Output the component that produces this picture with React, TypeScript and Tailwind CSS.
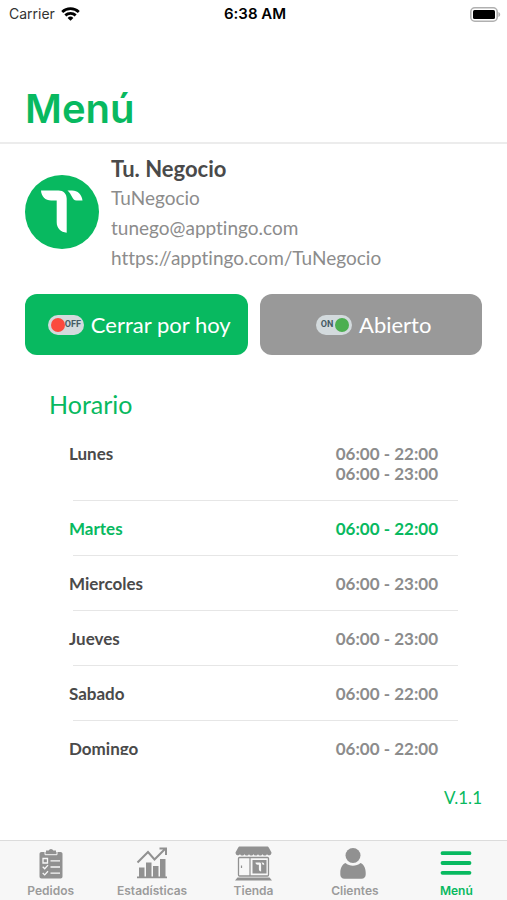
import type { ReactNode } from 'react'

type Day = { name: string; hours: string[] }

const DAYS: Day[] = [
  { name: 'Lunes', hours: ['06:00 - 22:00', '06:00 - 23:00'] },
  { name: 'Martes', hours: ['06:00 - 22:00'] },
  { name: 'Miercoles', hours: ['06:00 - 23:00'] },
  { name: 'Jueves', hours: ['06:00 - 23:00'] },
  { name: 'Sabado', hours: ['06:00 - 22:00'] },
  { name: 'Domingo', hours: ['06:00 - 22:00'] },
]

const TODAY = 'Martes'

function WifiIcon() {
  return (
    <svg viewBox="0 0 19 14" className="h-3.5 w-[19px]" fill="none" stroke="#000" strokeWidth="2.8">
      <path d="M1.2 4.9C5.8.6 13.2.6 17.8 4.9" />
      <path d="M4.3 8.4c2.9-2.6 7.5-2.6 10.4 0" />
      <path d="M9.5 13.8 6.6 10.9a4.2 4.2 0 0 1 5.8 0z" fill="#000" stroke="none" />
    </svg>
  )
}

function BatteryIcon() {
  return (
    <svg viewBox="0 0 31 15" className="h-[15px] w-[31px]">
      <rect x="0.8" y="0.8" width="26.4" height="13.4" rx="4" fill="#fff" stroke="#b0b0b0" strokeWidth="1.6" />
      <rect x="3" y="3" width="22" height="9" rx="1.5" fill="#000" />
      <path d="M28.4 5c2.4.8 2.4 4.2 0 5z" fill="#b0b0b0" />
    </svg>
  )
}

function Logo() {
  return (
    <svg viewBox="0 0 74 74" className="mb-1 size-[74px] shrink-0" role="img" aria-label="Tu. Negocio">
      <circle cx="37" cy="37" r="37" fill="#08b960" />
      <path d="M16 15.5h17.5c5 0 8.2 3.3 8.2 8.2v34c-6-.6-10-4.500-10-10.500V25.500h-5.500c-5.900 0-9.800-4-10.200-10z" fill="#fff" />
      <path d="M42.500 15.500h4.500c5.800 0 9.800 4 10.500 10h-6c-4.500 0-4.500-6.500-9-10z" fill="#fff" />
    </svg>
  )
}

function Pill({ on }: { on?: boolean }) {
  return (
    <span className={`flex h-5 w-9 items-center justify-between rounded-full bg-[#d3dadd] px-[3px] ${on ? 'flex-row-reverse' : ''}`}>
      <span className={`size-3.5 shrink-0 rounded-full ${on ? 'bg-[#4caf50]' : 'bg-[#fb4a3e]'}`} />
      <span className="flex-1 text-center font-['Roboto',sans-serif] text-[9px] leading-none font-bold text-[#455a64]">
        {on ? 'ON' : 'OFF'}
      </span>
    </span>
  )
}

function OrdersIcon() {
  return (
    <svg viewBox="0 0 24 31" className="h-[31px] w-6">
      <path d="M2.5 4h19c1.200 0 2 .8 2 2v22.500c0 1.200-.8 2-2 2h-19c-1.200 0-2-.8-2-2V6c0-1.200.8-2 2-2z" fill="#919191" />
      <path d="M6 3.500v3.200h12V3.500" fill="none" stroke="#f7f7f7" strokeWidth="1" />
      <path d="M7 5.800V2.600h2.700a2.400 2.400 0 0 1 4.600 0H17v3.200z" fill="#919191" />
      <g fill="none" stroke="#f7f7f7" strokeWidth="1.3">
        <path d="M4 10.500h4.500V15H4zM3.700 18.800l2 1.900 3.300-3.600M3.700 25l2 1.900L9 23.300M11.500 12.800H21M11.500 19H21M11.500 25.200H21" />
      </g>
    </svg>
  )
}

function StatsIcon() {
  return (
    <svg viewBox="0 0 32 32" className="size-8">
      <path d="M1 29.500h30v1.800H1zM3 20.500h5.500v9H3zM10 15.500h5.500v14H10zM17 19h5.500v10.500H17zM24 12h5.500v17.500H24z" fill="#919191" />
      <path d="M1.500 15.500 12 5l6.500 7.500L29 2M23.500 1.500h6.500V8" fill="none" stroke="#919191" strokeWidth="2" />
    </svg>
  )
}

function StoreIcon() {
  return (
    <svg viewBox="0 0 37 35" className="h-[35px] w-[37px]">
      <path d="M5 .5h27c1 0 1.500.4 1.900 1.200L36.500 6.500c0 3.500-4 3.500-4.500 1.500-.6 2-3.900 2-4.500 0-.6 2-3.900 2-4.500 0-.6 2-3.900 2-4.500 0-.6 2-3.900 2-4.500 0-.6 2-3.900 2-4.500 0-.6 2-3.900 2-4.500 0-.5 2-4.500 2-4.500-1.500L3.100 1.700C3.500.9 4 .5 5 .5z" fill="#919191" />
      <rect x="3.5" y="11.5" width="30" height="18.5" rx="1" fill="none" stroke="#919191" strokeWidth="1.3" />
      <path d="M15 11.500V30M6.500 19.500v2.500" stroke="#919191" strokeWidth="1.2" />
      <rect x="17.5" y="14" width="14" height="13.5" fill="#919191" />
      <path d="M20.500 16.500h4c1 0 1.600.6 1.600 1.600v7.400c-1.400-.2-2.200-1-2.200-2.300v-4.500h-1.400c-1.200 0-2-.9-2-2.200zM26.500 16.500h.8c1.200 0 2 .9 2 2.200h-1.200c-.8 0-.8-1.400-1.600-2.200z" fill="#f7f7f7" />
      <path d="M2.500 31.500h32L37 34.500H0z" fill="#919191" />
    </svg>
  )
}

function ClientsIcon() {
  return (
    <svg viewBox="0 0 26 31" className="mr-1 h-[31px] w-[26px]" fill="#919191">
      <circle cx="13" cy="7.5" r="7.5" />
      <path d="M5.500 15c4.200 3.500 10.800 3.500 15 0 3 1.200 5.200 5 5.200 9.500v2c0 2.600-1.600 4.300-4.200 4.300h-17C1.900 30.800.3 29.100.3 26.500v-2C.3 20 2.500 16.200 5.500 15z" />
    </svg>
  )
}

function MenuIcon() {
  return (
    <svg viewBox="0 0 32 24" className="h-6 w-8" stroke="#08b960" strokeWidth="3.8" strokeLinecap="round">
      <path d="M2.500 2.200h27M2.500 12h27M2.500 21.800h27" />
    </svg>
  )
}

function Tab({ label, icon, active }: { label: string; icon: ReactNode; active?: boolean }) {
  return (
    <a
      href={`#${label.toLowerCase()}`}
      aria-current={active ? 'page' : undefined}
      className={`flex flex-1 flex-col items-center text-xs font-semibold ${active ? 'text-[#08b960]' : 'text-[#9b9b9b]'}`}
    >
      <span className="flex h-[38px] items-center">{icon}</span>
      <span className="leading-[18px]">{label}</span>
    </a>
  )
}

export default function App() {
  return (
    <div className="flex h-screen flex-col overflow-hidden bg-white font-['Lato','Open_Sans',sans-serif] text-[#8c8c8c] [font-variant-ligatures:none]">
      <div className="grid h-7 shrink-0 grid-cols-3 items-center pr-1.5 pl-[9px] font-['Inter',sans-serif] text-sm text-black">
        <span className="flex items-center gap-1.5 text-[#333]">Carrier <WifiIcon /></span>
        <span className="text-center text-[15px] font-semibold">6:38 AM</span>
        <span className="flex justify-end"><BatteryIcon /></span>
      </div>

      <header className="shrink-0 border-b-2 border-[#ececec] px-[25px] pt-[57px] pb-[9px]">
        <h1 className="font-['Inter',sans-serif] text-[40px] leading-12 font-semibold text-[#08b960]">Menú</h1>
      </header>

      <main className="flex min-h-0 flex-1 flex-col px-[25px] pt-[10px]">
        <section className="flex shrink-0 items-center gap-3 text-[19px] leading-[30px]">
          <Logo />
          <div>
            <h2 className="text-[22px] leading-[29px] font-bold text-[#4a4a4a]">Tu. Negocio</h2>
            <p>TuNegocio</p>
            <p><a href="mailto:tunego@apptingo.com">tunego@apptingo.com</a></p>
            <p><a href="https://apptingo.com/TuNegocio">https://apptingo.com/TuNegocio</a></p>
          </div>
        </section>

        <div className="mt-[21px] flex shrink-0 gap-3 text-[22px] text-white">
          <button type="button" className="flex h-[61px] flex-1 items-center justify-center gap-[7px] rounded-xl bg-[#08b960] pl-1.5">
            <Pill /> Cerrar por hoy
          </button>
          <button type="button" className="flex h-[61px] flex-1 items-center justify-center gap-[7px] rounded-xl bg-[#999] pl-1.5">
            <Pill on /> Abierto
          </button>
        </div>

        <section className="mt-[35px] min-h-0 flex-1 overflow-y-auto px-6 [scrollbar-width:none]">
          <h2 className="text-[25px] leading-7 text-[#08b960]">Horario</h2>
          <table className="mt-2 ml-6 w-[calc(100%-24px)] border-collapse text-[17px] leading-5 font-bold">
            <tbody>
              {DAYS.map(day => (
                <tr key={day.name} className={`border-b border-[#e6e6e6] ${day.name === TODAY ? 'text-[#08b960]' : ''}`}>
                  <th scope="row" className={`pt-[18px] pb-4 text-left align-top ${day.name === TODAY ? '' : 'text-[#4a4a4a]'}`}>
                    <span className="-ml-1 block">{day.name}</span>
                  </th>
                  <td className="pt-[18px] pr-5 pb-4 text-right">
                    {day.hours.map(h => <div key={h}>{h}</div>)}
                  </td>
                </tr>
              ))}
            </tbody>
          </table>
        </section>

        <p className="shrink-0 pt-[33px] pb-8 text-right text-[17px] leading-5 text-[#08b960]">V.1.1</p>
      </main>

      <nav className="flex h-[60px] shrink-0 border-t border-[#dcdcdc] bg-[#f7f7f7] pt-[3px] font-['Inter',sans-serif]">
        <Tab label="Pedidos" icon={<OrdersIcon />} />
        <Tab label="Estadísticas" icon={<StatsIcon />} />
        <Tab label="Tienda" icon={<StoreIcon />} />
        <Tab label="Clientes" icon={<ClientsIcon />} />
        <Tab label="Menú" icon={<MenuIcon />} active />
      </nav>
    </div>
  )
}
